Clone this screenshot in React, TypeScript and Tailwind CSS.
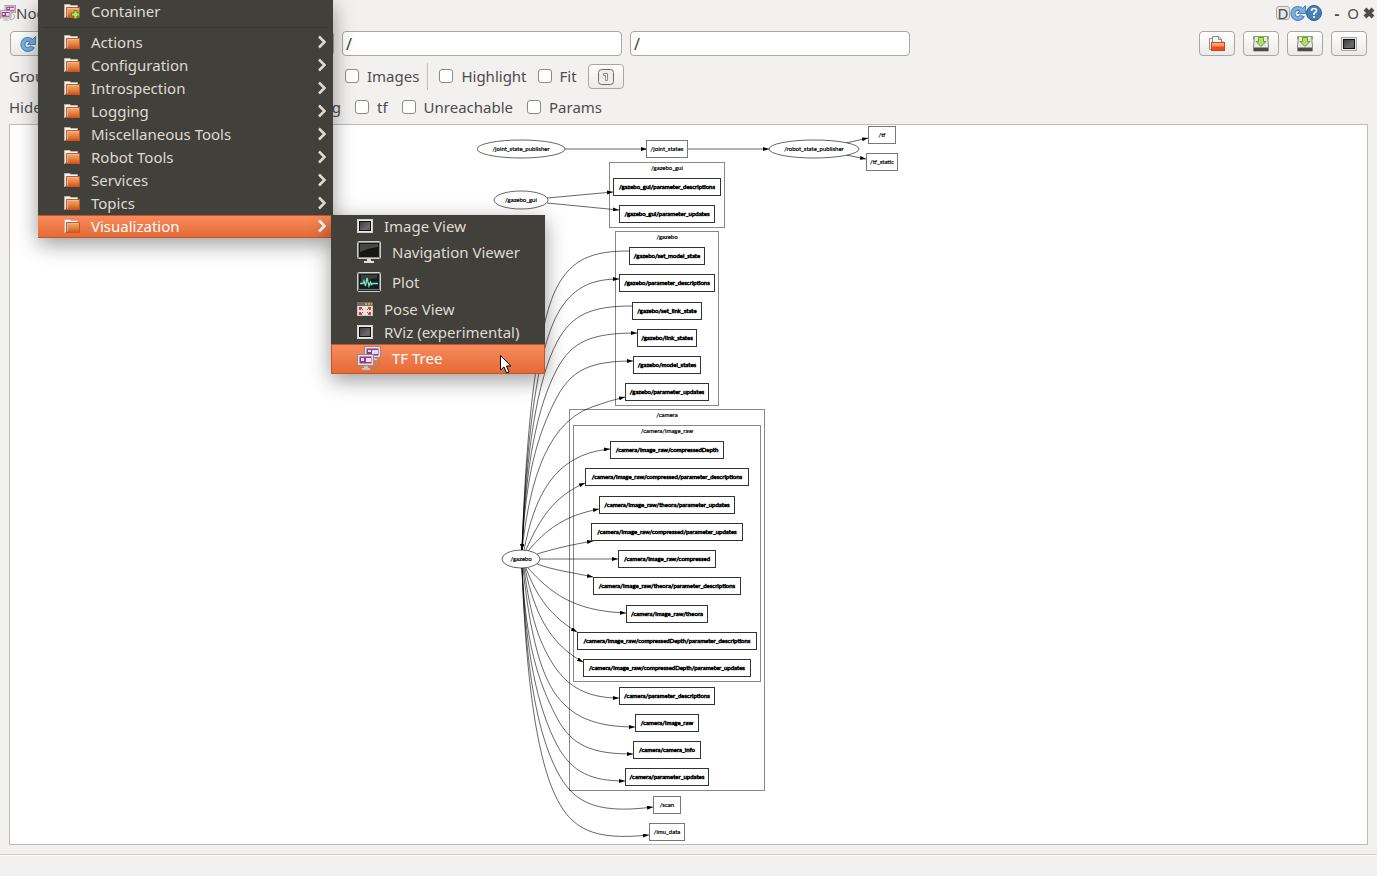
import { useState } from "react";

type Box = { label: string; x: number; y: number; w: number; plain?: boolean };
type Ellipse = { label: string; x: number; y: number; rx: number };

// Topic boxes, x is the left edge and y the middle
const boxes: Box[] = [
    { label: "/joint_states", x: 646, y: 149, w: 42, plain: true },
    { label: "/tf", x: 868, y: 135, w: 28, plain: true },
    { label: "/tf_static", x: 866, y: 162, w: 32, plain: true },
    { label: "/gazebo_gui/parameter_descriptions", x: 613, y: 187, w: 108 },
    { label: "/gazebo_gui/parameter_updates", x: 619, y: 214, w: 96 },
    { label: "/gazebo/set_model_state", x: 629, y: 256, w: 76 },
    { label: "/gazebo/parameter_descriptions", x: 619, y: 283, w: 96 },
    { label: "/gazebo/set_link_state", x: 632, y: 311, w: 70 },
    { label: "/gazebo/link_states", x: 637, y: 338, w: 60 },
    { label: "/gazebo/model_states", x: 633, y: 365, w: 68 },
    { label: "/gazebo/parameter_updates", x: 625, y: 392, w: 84 },
    { label: "/camera/image_raw/compressedDepth", x: 610, y: 450, w: 114 },
    { label: "/camera/image_raw/compressed/parameter_descriptions", x: 585, y: 477, w: 164 },
    { label: "/camera/image_raw/theora/parameter_updates", x: 599, y: 505, w: 136 },
    { label: "/camera/image_raw/compressed/parameter_updates", x: 591, y: 532, w: 152 },
    { label: "/camera/image_raw/compressed", x: 618, y: 559, w: 98 },
    { label: "/camera/image_raw/theora/parameter_descriptions", x: 593, y: 586, w: 148 },
    { label: "/camera/image_raw/theora", x: 626, y: 614, w: 82 },
    { label: "/camera/image_raw/compressedDepth/parameter_descriptions", x: 577, y: 641, w: 180 },
    { label: "/camera/image_raw/compressedDepth/parameter_updates", x: 583, y: 668, w: 168 },
    { label: "/camera/parameter_descriptions", x: 619, y: 696, w: 96 },
    { label: "/camera/image_raw", x: 635, y: 723, w: 64 },
    { label: "/camera/camera_info", x: 633, y: 750, w: 68 },
    { label: "/camera/parameter_updates", x: 625, y: 777, w: 84 },
    { label: "/scan", x: 653, y: 805, w: 28, plain: true },
    { label: "/imu_data", x: 649, y: 832, w: 36, plain: true },
];

const ellipses: Ellipse[] = [
    { label: "/joint_state_publisher", x: 521, y: 149, rx: 44 },
    { label: "/robot_state_publisher", x: 814, y: 149, rx: 45 },
    { label: "/gazebo_gui", x: 521, y: 200, rx: 27 },
    { label: "/gazebo", x: 521, y: 559, rx: 19 },
];

const clusters = [
    { label: "/gazebo_gui", x: 609, y: 162, w: 116, h: 65 },
    { label: "/gazebo", x: 615, y: 231, w: 104, h: 174 },
    { label: "/camera", x: 569, y: 409, w: 196, h: 381 },
    { label: "/camera/image_raw", x: 573, y: 425, w: 188, h: 256 },
];

const up = (x: number, y: number) =>
    `M522 550 C526 ${550 - (550 - y) * 0.4} 537 ${y + 74} 557 ${y + 36} C572 ${y + 8} 592 ${y} ${x} ${y}`;
const down = (x: number, y: number) =>
    `M522 568 C526 ${568 + (y - 568) * 0.4} 537 ${y - 74} 557 ${y - 36} C572 ${y - 8} 592 ${y} ${x} ${y}`;
const into = (x: number, y: number) =>
    `M${x} ${y} C592 ${y} 572 ${y + 8} 557 ${y + 36} C537 ${y + 74} 526 ${550 - (550 - y) * 0.4} 522 550`;

const edges = [
    "M565 149 H647",
    "M688 149 H769",
    "M846 143 L868 138",
    "M846 155 L866 159",
    "M547 198 L613 192",
    "M547 203 L619 210",
    into(629, 251),
    up(619, 279),
    into(632, 306),
    up(637, 333),
    up(633, 361),
    "M522 550 C528 500 540 425 592 407 Q608 401 625 397",
    "M524 550 C534 500 552 454 610 449",
    "M526 550 C539 520 554 496 585 483",
    "M528 551 C546 530 563 516 599 509",
    "M537 554 C553 549 570 545 593 541",
    "M540 559 H618",
    "M537 564 C553 570 570 572 593 577",
    "M528 568 C550 592 572 611 626 613",
    "M526 568 C537 598 552 617 577 632",
    "M525 568 C535 617 552 645 583 662",
    "M524 568 C530 615 539 645 557 670 C572 690 592 698 619 698",
    "M523 568 C528 615 536 664 554 692 C571 717 595 727 635 727",
    down(633, 754),
    down(625, 781),
    "M522 568 C526 670 537 732 557 771 C572 800 592 815 653 807",
    "M522 568 C526 680 537 760 557 799 C572 828 592 841 649 835",
];

const folderItems = [
    "Actions",
    "Configuration",
    "Introspection",
    "Logging",
    "Miscellaneous Tools",
    "Robot Tools",
    "Services",
    "Topics",
    "Visualization",
];

function FolderIcon({ add }: { add?: boolean }) {
    return (
        <svg width="16" height="16" viewBox="0 0 16 16" className="shrink-0">
            <defs>
                <linearGradient id="folder" x1="0" y1="0" x2="0" y2="1">
                    <stop offset="0" stopColor="#edb07c" />
                    <stop offset="0.5" stopColor="#e18a48" />
                    <stop offset="1" stopColor="#d8501a" />
                </linearGradient>
            </defs>
            <path d="M0.5 15 V1.5 H6 L7 2.5 H13.5 V5" fill="#efeeec" stroke="#b9b5b0" />
            <path d="M1.5 2.5 H5.5 L6.5 3.5 H13" stroke="#ffffff" fill="none" />
            <path d="M2.5 14.5 V4.5 H15.5 V14.5 Z" fill="url(#folder)" stroke="#cf541f" />
            <path d="M3.5 13.5 V5.5 H14.5" fill="none" stroke="#f2c29b" strokeOpacity="0.7" />
            {add && <path d="M10 7.5 H13 V10 H15.5 V13 H13 V15.5 H10 V13 H7.5 V10 H10 Z" fill="#b9dc7a" stroke="#4f8b18" />}
        </svg>
    );
}

function OpenIcon() {
    return (
        <svg width="16" height="16" viewBox="0 0 16 16">
            <path d="M0.5 13.5 V2.5 H3.5 V0.5 H10 L12.5 3 V6 H14.5 V13.5 Z" fill="#f6f5f4" stroke="#8f8c87" />
            <path d="M3.5 3 V8 M9.5 0.5 V3.5 H12.5" fill="none" stroke="#8f8c87" />
            <rect x="2.5" y="6.5" width="13" height="8" fill="#ec7037" stroke="#cf4513" />
            <path d="M3 7.5 H15" stroke="#f6b18b" />
            <rect x="3" y="8" width="12" height="2" fill="#f09a6c" />
            <rect x="3" y="11" width="12" height="3" fill="#e6501a" />
        </svg>
    );
}

function SaveIcon() {
    return (
        <svg width="16" height="16" viewBox="0 0 16 16">
            <path d="M1.5 0.5 H14.5 L15.5 10 V15 H0.5 V10 Z" fill="#e9e8e6" stroke="#8d8a85" />
            <path d="M0.5 3.5 V0.5 H15.5 V3.5" fill="none" stroke="#80b143" />
            <rect x="1" y="11" width="14" height="4" fill="#4a4a4a" />
            <path d="M1 11.5 H15" stroke="#9b9b9b" />
            <path d="M5.5 1.5 H10.5 V5.5 H13 L8 10.5 L3 5.5 H5.5 Z" fill="#b5dc6c" stroke="#6a9c32" />
        </svg>
    );
}

function ScreenIcon({ dark }: { dark?: boolean }) {
    return (
        <svg width="16" height="16" viewBox="0 0 16 16" className="shrink-0">
            <defs>
                <linearGradient id="screen" x1="0" y1="0" x2="1" y2="1">
                    <stop offset="0" stopColor="#3a3a3a" />
                    <stop offset="0.7" stopColor="#6b6b6b" />
                    <stop offset="1" stopColor="#555555" />
                </linearGradient>
            </defs>
            <rect x="0.5" y="1.5" width="15" height="13" fill="#e8e8e8" stroke={dark ? "#d0d0cc" : "#a9a6a2"} />
            <rect x="2.5" y="3.5" width="11" height="9" fill="url(#screen)" stroke="#111111" />
        </svg>
    );
}

function MonitorIcon() {
    return (
        <svg width="24" height="24" viewBox="0 0 24 24" className="shrink-0">
            <rect x="0.5" y="1.5" width="23" height="17" rx="1" fill="#111111" stroke="#c9c9c7" />
            <rect x="1.5" y="2.5" width="21" height="15" fill="#161616" stroke="#8f8f8d" />
            <path d="M3 4 H21 V7 Q11 8 3 12 Z" fill="#474747" />
            <path d="M10 19 H14 V21 H17 V23 H7 V21 H10 Z" fill="#dededb" />
        </svg>
    );
}

function PlotIcon() {
    return (
        <svg width="24" height="24" viewBox="0 0 24 24" className="shrink-0">
            <rect x="0.5" y="2.5" width="23" height="19" rx="1" fill="#16201f" stroke="#d3d3d1" />
            <rect x="1.5" y="3.5" width="21" height="16" fill="#14201f" stroke="#777777" />
            <path d="M4 5 H20 V8 Q11 9 4 14 Z" fill="#38403f" />
            <path d="M3 13.5 H6 L7 11 L8.5 16 L10 8 L12 16 L13.5 12 L14.5 14.5 L15.5 13.5 H21" fill="none" stroke="#7fe3c8" strokeWidth="1.3" />
        </svg>
    );
}

function PoseIcon() {
    return (
        <svg width="16" height="16" viewBox="0 0 16 16" className="shrink-0">
            <rect x="0.5" y="1.5" width="15" height="13" fill="#e4e3e1" stroke="#c9c7c4" />
            <rect x="0" y="1" width="16" height="4" fill="#716e68" />
            <path d="M8 3 H10 M11 3 H13 M14 3 H15" stroke="#e2a33c" strokeWidth="2" />
            <path d="M2 6 H5 V7 H4 V9 H2 Z M14 6 V9 H12 V7 H11 V6 Z M2 14 V11 H4 V13 H5 V14 Z M14 14 H11 V13 H12 V11 H14 Z" fill="#d8393a" />
            <path d="M4 7 L6 9 M12 7 L10 9 M4 13 L6 11 M12 13 L10 11" stroke="#d8393a" />
        </svg>
    );
}

function TreeIcon({ size }: { size: number }) {
    return (
        <svg width={size} height={size} viewBox="0 0 24 24" className="shrink-0">
            <path d="M19 13 Q24 16 21 20 Q18 23 14 22" fill="none" stroke="#8b8884" />
            <rect x="8.5" y="1.5" width="14" height="9" fill="#97358f" stroke="#e4e2df" strokeWidth="2" />
            <rect x="7.5" y="0.5" width="16" height="11" fill="none" stroke="#8f8b87" />
            <path d="M11 4 H14 V6 H11 Z M15 4 H21 V8 H15 Z" fill="#ecd7ea" />
            <path d="M14 12 H18 V13 H20 V14 H14 Z" fill="#d6d4d0" />
            <rect x="1.5" y="9.5" width="14" height="9" fill="#97358f" stroke="#e4e2df" strokeWidth="2" />
            <rect x="0.5" y="8.5" width="16" height="11" fill="none" stroke="#8f8b87" />
            <path d="M4 12 H7 V15 H4 Z M9 12 H14 V16 H9 Z" fill="#f0e0ee" />
            <path d="M7 20 H11 V22 H13 V24 H5 V22 H7 Z" fill="#c6c4c0" />
        </svg>
    );
}

function RefreshIcon() {
    return (
        <svg width="16" height="16" viewBox="0 0 16 16">
            <path d="M12.5 10.5 A5 5 0 1 1 11 4.5" fill="none" stroke="#4480bd" strokeWidth="5" />
            <path d="M15.5 0.5 V8.5 H7.5 Z" fill="#7fb0de" stroke="#4480bd" />
            <path d="M12 11.2 A5 5 0 1 1 12 5.5" fill="none" stroke="#7fb0de" strokeWidth="3" />
        </svg>
    );
}

function Chevron() {
    return (
        <svg width="10" height="14" viewBox="0 0 10 14" className="ml-auto shrink-0">
            <path d="M2 1.5 L7.5 7 L2 12.5" fill="none" stroke="currentColor" strokeWidth="2.5" />
        </svg>
    );
}

function ToolButton({ label, children }: { label: string; children: React.ReactNode }) {
    return (
        <button
            type="button"
            aria-label={label}
            className="flex h-[25px] w-9 shrink-0 items-center justify-center rounded border border-[#aaa7a2] bg-linear-to-b from-white to-[#ebeae8]"
        >
            {children}
        </button>
    );
}

function Check({ label }: { label: string }) {
    const [checked, setChecked] = useState(false);

    return (
        <label className="flex items-center gap-2 pb-[2px]">
            <input
                type="checkbox"
                checked={checked}
                onChange={(e) => setChecked(e.target.checked)}
                className="size-[14px] appearance-none rounded-[3px] border border-[#8e8b86] bg-white checked:bg-[#f07746]"
            />
            {label}
        </label>
    );
}

function Graph() {
    return (
        <svg
            width="424"
            height="718"
            viewBox="477 125 424 718"
            fontFamily="Lato, 'Open Sans', sans-serif"
            fontSize="6"
            textAnchor="middle"
            className="shrink-0"
        >
            <defs>
                <marker id="arrow" markerUnits="userSpaceOnUse" markerWidth="6" markerHeight="4" refX="6" refY="2" orient="auto">
                    <path d="M0 0 L6 2 L0 4 Z" fill="#000000" />
                </marker>
            </defs>
            {clusters.map((c) => (
                <g key={c.label}>
                    <rect x={c.x + 0.5} y={c.y + 0.5} width={c.w - 1} height={c.h} fill="none" stroke="#888888" />
                    <text x="667" y={c.y + 8} fill="#000000" stroke="#000000" strokeWidth="0.2">
                        {c.label}
                    </text>
                </g>
            ))}
            {edges.map((d) => (
                <path key={d} d={d} fill="none" stroke="#000000" strokeWidth="0.6" markerEnd="url(#arrow)" />
            ))}
            {ellipses.map((n) => (
                <g key={n.label}>
                    <ellipse cx={n.x} cy={n.y} rx={n.rx} ry="9" fill="#ffffff" stroke="#000000" strokeWidth="0.6" />
                    <text x={n.x} y={n.y + 2} fill="#000000" stroke="#000000" strokeWidth="0.2">
                        {n.label}
                    </text>
                </g>
            ))}
            {boxes.map((n) => (
                <g key={n.label}>
                    <rect
                        x={n.x + 0.5}
                        y={n.y - 8.5}
                        width={n.w - 1}
                        height="17"
                        fill="none"
                        stroke={n.plain ? "#777777" : "#333333"}
                    />
                    <text
                        x={n.x + n.w / 2}
                        y={n.y + 2}
                        fill="#000000"
                        stroke="#000000"
                        strokeWidth={n.plain ? 0.2 : 0.5}
                    >
                        {n.label}
                    </text>
                </g>
            ))}
        </svg>
    );
}

function Menu() {
    return (
        <div
            role="menu"
            className="absolute top-0 left-[38px] w-[295px] bg-[#41403a] text-[#dfdbd2] shadow-[0_6px_20px_rgba(0,0,0,0.4)]"
        >
            <button type="button" className="flex h-6 w-full items-center gap-[11px] pb-[2px] pl-[26px]">
                <FolderIcon add />
                Container
            </button>
            <div className="mx-1 flex h-[7px] items-center">
                <div className="h-px w-full bg-[#38372f]" />
            </div>
            {folderItems.map((item) => (
                <button
                    key={item}
                    type="button"
                    className={
                        item === "Visualization"
                            ? "flex h-[23px] w-full items-center gap-[11px] border-y border-[#c3552a] bg-linear-to-b from-[#f98a5c] to-[#e46b35] pr-[6px] pb-[2px] pl-[26px] text-white"
                            : "flex h-[23px] w-full items-center gap-[11px] pr-[6px] pb-[2px] pl-[26px]"
                    }
                >
                    <FolderIcon />
                    {item}
                    <Chevron />
                </button>
            ))}
        </div>
    );
}

function SubMenu() {
    return (
        <div
            role="menu"
            className="absolute top-[215px] left-[331px] w-[214px] bg-[#41403a] text-[#dfdbd2] shadow-[0_6px_20px_rgba(0,0,0,0.4)]"
        >
            <button type="button" className="flex h-[23px] w-full items-center gap-[11px] pb-[2px] pl-[26px]">
                <ScreenIcon dark />
                Image View
            </button>
            <button type="button" className="flex h-[30px] w-full items-center gap-[11px] pb-[2px] pl-[26px]">
                <MonitorIcon />
                Navigation Viewer
            </button>
            <button type="button" className="flex h-[30px] w-full items-center gap-[11px] pb-[2px] pl-[26px]">
                <PlotIcon />
                Plot
            </button>
            <button type="button" className="flex h-[23px] w-full items-center gap-[11px] pb-[2px] pl-[26px]">
                <PoseIcon />
                Pose View
            </button>
            <button type="button" className="flex h-[23px] w-full items-center gap-[11px] pb-[2px] pl-[26px]">
                <ScreenIcon dark />
                RViz (experimental)
            </button>
            <button
                type="button"
                className="flex h-[30px] w-full items-center gap-[11px] border border-[#c3552a] bg-linear-to-b from-[#f98a5c] to-[#e46b35] pb-[2px] pl-[25px] text-white"
            >
                <TreeIcon size={24} />
                TF Tree
            </button>
            {/* Mouse pointer */}
            <svg width="14" height="21" viewBox="0 0 14 21" className="absolute top-[139px] left-[168px]">
                <path
                    d="M1.5 1.5 V16 L5 13 L7.5 19 L10 18 L7.5 12 H12 Z"
                    fill="#ffffff"
                    stroke="#000000"
                />
            </svg>
        </div>
    );
}

export default function App() {
    const [view, setView] = useState("nodes");
    const [nodeFilter, setNodeFilter] = useState("/");
    const [topicFilter, setTopicFilter] = useState("/");

    return (
        <div className="relative flex min-h-screen flex-col bg-[#f2f1f0] font-['Noto_Sans','Open_Sans',sans-serif] text-[15px] leading-5 text-[#4c4c4c]">
            {/* Title bar */}
            <header className="flex h-[27px] items-center pb-[2px]">
                <TreeIcon size={16} />
                <h1>Node</h1>
                <div className="ml-auto flex items-center pr-[2px]">
                    <button type="button" className="flex h-[14px] w-[14px] items-center justify-center rounded-[3px] border border-[#a9a6a2] bg-[#e7e6e4]">
                        D
                    </button>
                    <button type="button" aria-label="Reload">
                        <RefreshIcon />
                    </button>
                    <button type="button" aria-label="Help">
                        <svg width="16" height="16" viewBox="0 0 16 16">
                            <circle cx="8" cy="8" r="7.5" fill="#4580b8" stroke="#275d94" />
                            <path d="M5.5 6 Q5.5 3.5 8 3.5 Q10.5 3.5 10.5 5.5 Q10.5 7 8 8.5 V10 M8 11 V13" fill="none" stroke="#ffffff" strokeWidth="1.6" />
                        </svg>
                    </button>
                    <button type="button" className="ml-3 w-[6px] font-bold">-</button>
                    <button type="button" className="ml-[7px] w-3">O</button>
                    <button type="button" aria-label="Close" className="ml-1">
                        <svg width="12" height="14" viewBox="0 0 12 14">
                            <path d="M2 3 L10 11 M10 3 L2 11" stroke="#4c4c4c" strokeWidth="4" />
                        </svg>
                    </button>
                </div>
            </header>

            {/* Toolbar */}
            <div className="flex h-[33px] items-center gap-2 pr-[10px] pl-[10px]">
                <ToolButton label="Refresh graph">
                    <RefreshIcon />
                </ToolButton>
                <select
                    aria-label="Graph type"
                    value={view}
                    onChange={(e) => setView(e.target.value)}
                    className="h-[25px] w-[280px] min-w-0 rounded border border-[#aaa7a2] bg-white"
                >
                    <option value="nodes">Nodes only</option>
                </select>
                <input
                    aria-label="Node filter"
                    value={nodeFilter}
                    onChange={(e) => setNodeFilter(e.target.value)}
                    className="h-[25px] w-[280px] min-w-0 rounded border border-[#aaa7a2] bg-white px-[3px] text-base text-[#3c3c3c]"
                />
                <input
                    aria-label="Topic filter"
                    value={topicFilter}
                    onChange={(e) => setTopicFilter(e.target.value)}
                    className="h-[25px] w-[280px] min-w-0 rounded border border-[#aaa7a2] bg-white px-[3px] text-base text-[#3c3c3c]"
                />
                <div className="ml-auto flex gap-2">
                    <ToolButton label="Load dot graph">
                        <OpenIcon />
                    </ToolButton>
                    <ToolButton label="Save dot graph">
                        <SaveIcon />
                    </ToolButton>
                    <ToolButton label="Save as SVG">
                        <SaveIcon />
                    </ToolButton>
                    <ToolButton label="Save as image">
                        <ScreenIcon />
                    </ToolButton>
                </div>
            </div>
            <div className="flex h-[33px] items-center pl-[9px]">
                <span className="w-[336px] pb-[2px]">Group:</span>
                <Check label="Images" />
                <div className="mr-[11px] ml-2 h-[27px] w-px bg-[#c3c0bc]" />
                <Check label="Highlight" />
                <div className="w-[11px]" />
                <Check label="Fit" />
                <div className="w-[11px]" />
                <ToolButton label="Zoom to fit">
                    <svg width="16" height="16" viewBox="0 0 16 16">
                        <rect x="0.5" y="0.5" width="15" height="15" rx="3" fill="#efeeed" stroke="#6e6c69" />
                        <path d="M5.5 6.5 V4.5 H9.5 V11.5 H7.5 V6.5 Z" fill="#ffffff" stroke="#8b8986" />
                    </svg>
                </ToolButton>
            </div>
            <div className="flex h-[31px] items-center gap-[14px] pb-[2px] pl-[9px]">
                <div className="flex w-[332px] justify-between pb-[2px]">
                    <span>Hide:</span>
                    <span>Debug</span>
                </div>
                <Check label="tf" />
                <Check label="Unreachable" />
                <Check label="Params" />
            </div>

            {/* Graph canvas */}
            <main className="mx-[9px] flex grow justify-center border border-[#bfbcb8] bg-white">
                <Graph />
            </main>
            <footer className="flex h-[31px] flex-col pt-[9px]">
                <div className="border-t border-[#cfccc8]" />
                <div className="border-t border-white" />
            </footer>

            <Menu />
            <SubMenu />
        </div>
    );
}
